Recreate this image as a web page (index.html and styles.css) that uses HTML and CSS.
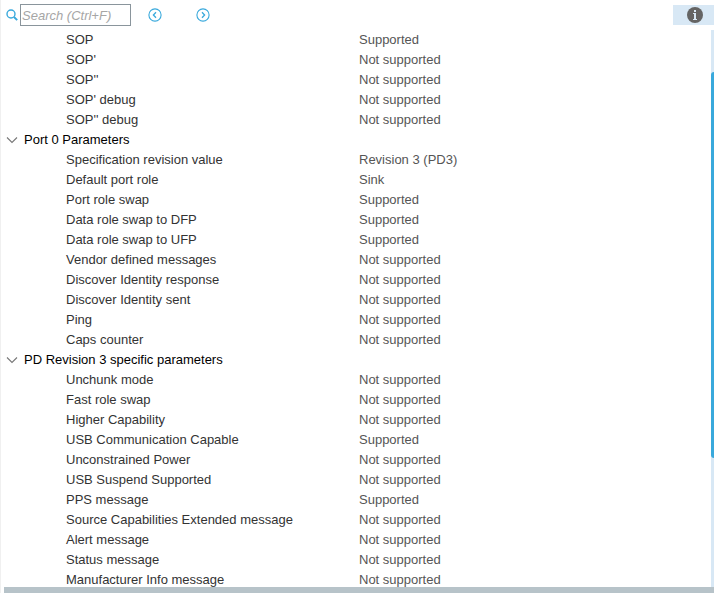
FILE: index.html
```html
<!DOCTYPE html>
<html lang="en">
<head>
  <meta charset="utf-8">
  <title>Port Parameters</title>
  <link rel="stylesheet" href="styles.css">
</head>
<body>

  <div class="panel">
    <div class="toolbar">
      <label class="search-label" for="search" aria-label="Search">
        <svg width="12" height="12" viewBox="0 0 12 12" fill="none" stroke="#39a9dc">
          <circle cx="5" cy="5" r="4" stroke-width="1.4"/>
          <path d="M8 8l3.2 3.2" stroke-width="1.9"/>
        </svg>
      </label>
      <input class="search" type="text" id="search" placeholder="Search (Ctrl+F)">
      <button class="nav-button" type="button" aria-label="Previous">
        <svg width="14" height="14" viewBox="0 0 14 14" fill="none" stroke="#39a9dc">
          <circle cx="7" cy="7" r="6.1" stroke-width="1.1"/>
          <path d="M8 4.2L5.4 7L8 9.8" stroke-width="1.3"/>
        </svg>
      </button>
      <button class="nav-button" type="button" aria-label="Next">
        <svg width="14" height="14" viewBox="0 0 14 14" fill="none" stroke="#39a9dc">
          <circle cx="7" cy="7" r="6.1" stroke-width="1.1"/>
          <path d="M6 4.2L8.6 7L6 9.8" stroke-width="1.3"/>
        </svg>
      </button>
      <button class="info-button" type="button" aria-label="Information">
        <svg width="16" height="16" viewBox="0 0 16 16">
          <circle cx="8" cy="8" r="8" fill="#646464"/>
          <path d="M7 3h2v2H7zM6 6h3v6h1v1H6v-1h1V7H6z" fill="#d8e8f5"/>
        </svg>
      </button>
    </div>

    <div class="content">
      <div class="list">
        <table class="params">
          <tbody>
            <tr><td>SOP</td><td>Supported</td></tr>
            <tr><td>SOP'</td><td>Not supported</td></tr>
            <tr><td>SOP''</td><td>Not supported</td></tr>
            <tr><td>SOP' debug</td><td>Not supported</td></tr>
            <tr><td>SOP'' debug</td><td>Not supported</td></tr>
          </tbody>
          <tbody>
            <tr>
              <th colspan="2">
                <button class="group" type="button" aria-expanded="true">
                  <svg width="12" height="8" viewBox="0 0 12 8" fill="none" stroke="#777"><path d="M1 1.5l5 5l5-5" stroke-width="1.1"/></svg>
                  Port 0 Parameters
                </button>
              </th>
            </tr>
            <tr><td>Specification revision value</td><td>Revision 3 (PD3)</td></tr>
            <tr><td>Default port role</td><td>Sink</td></tr>
            <tr><td>Port role swap</td><td>Supported</td></tr>
            <tr><td>Data role swap to DFP</td><td>Supported</td></tr>
            <tr><td>Data role swap to UFP</td><td>Supported</td></tr>
            <tr><td>Vendor defined messages</td><td>Not supported</td></tr>
            <tr><td>Discover Identity response</td><td>Not supported</td></tr>
            <tr><td>Discover Identity sent</td><td>Not supported</td></tr>
            <tr><td>Ping</td><td>Not supported</td></tr>
            <tr><td>Caps counter</td><td>Not supported</td></tr>
          </tbody>
          <tbody>
            <tr>
              <th colspan="2">
                <button class="group" type="button" aria-expanded="true">
                  <svg width="12" height="8" viewBox="0 0 12 8" fill="none" stroke="#777"><path d="M1 1.5l5 5l5-5" stroke-width="1.1"/></svg>
                  PD Revision 3 specific parameters
                </button>
              </th>
            </tr>
            <tr><td>Unchunk mode</td><td>Not supported</td></tr>
            <tr><td>Fast role swap</td><td>Not supported</td></tr>
            <tr><td>Higher Capability</td><td>Not supported</td></tr>
            <tr><td>USB Communication Capable</td><td>Supported</td></tr>
            <tr><td>Unconstrained Power</td><td>Not supported</td></tr>
            <tr><td>USB Suspend Supported</td><td>Not supported</td></tr>
            <tr><td>PPS message</td><td>Supported</td></tr>
            <tr><td>Source Capabilities Extended message</td><td>Not supported</td></tr>
            <tr><td>Alert message</td><td>Not supported</td></tr>
            <tr><td>Status message</td><td>Not supported</td></tr>
            <tr><td>Manufacturer Info message</td><td>Not supported</td></tr>
          </tbody>
        </table>
      </div>
      <div class="scrollbar">
        <div class="thumb"></div>
      </div>
    </div>

    <div class="bottom-bar"></div>
  </div>

</body>
</html>
```

FILE: styles.css
```css
* {
  box-sizing: border-box;
}

body {
  margin: 0;
  background-color: white;
  color: #333;
  font-family: "Liberation Sans", Arial, sans-serif;
  font-size: 13px;
}

button {
  border: none;
  padding: 0;
  background: none;
  font: inherit;
  cursor: pointer;
}

svg {
  display: block;
}

.panel {
  display: flex;
  flex-direction: column;
  height: 100vh;
  border-left: 1px solid #f0f0f0;
}

.toolbar {
  display: flex;
  align-items: center;
  flex: none;
  height: 30px;
  padding-left: 5px;
}

.search-label {
  margin-right: 2px;
}

.search {
  width: 111px;
  height: 22px;
  margin-right: 17px;
  padding: 0 1px;
  border: 1px solid #8a959c;
  border-radius: 0;
  font: inherit;
  font-style: italic;
}

.search::placeholder {
  color: #a6a6a6;
}

.nav-button {
  margin-right: 34px;
}

.info-button {
  display: flex;
  align-items: center;
  justify-content: center;
  width: 41px;
  height: 20px;
  margin-left: auto;
  padding-left: 3px;
  background-color: #d8e8f5;
}

.content {
  display: flex;
  flex: 1;
  min-height: 0;
}

.list {
  flex: 1;
  overflow: hidden;
}

.params {
  width: 100%;
  border-collapse: collapse;
  table-layout: fixed;
}

.params td,
.params th {
  height: 20px;
  padding: 0;
  font-weight: normal;
  line-height: 20px;
  white-space: nowrap;
}

.params td:first-child {
  width: 358px;
  padding-left: 65px;
}

.params td:last-child {
  color: #555;
}

.group {
  display: flex;
  align-items: center;
  gap: 6px;
  padding-left: 5px;
  color: black;
}

.scrollbar {
  display: grid;
  grid-template-rows: 42fr 386fr 129fr;
  width: 3px;
  background-color: #d8e8f5;
}

.thumb {
  grid-row: 2;
  border-radius: 3px 0 0 3px;
  background-color: #39a9dc;
}

.bottom-bar {
  flex: none;
  height: 6px;
  margin-left: 3px;
  background-color: #b7c3c9;
}
```
